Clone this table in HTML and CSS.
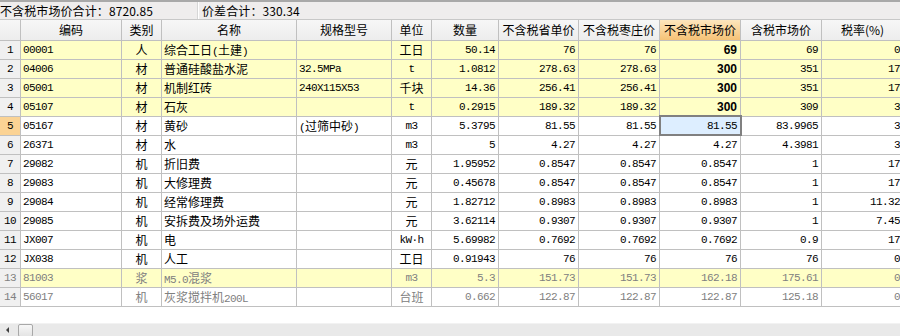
FILE: index.html
```html
<!DOCTYPE html>
<html lang="zh">
<head>
<meta charset="utf-8">
<link rel="stylesheet" href="styles.css">
</head>
<body>
<div class="app">
  <div class="sumbar">
    <div class="sum sum1">不含税市场价合计：8720.85</div>
    <div class="sum sum2">价差合计：330.34</div>
  </div>
  <div class="grid">
    <div class="row head">
      <div class="c rn"></div>
      <div class="c">编码</div>
      <div class="c">类别</div>
      <div class="c">名称</div>
      <div class="c">规格型号</div>
      <div class="c">单位</div>
      <div class="c">数量</div>
      <div class="c">不含税省单价</div>
      <div class="c">不含税枣庄价</div>
      <div class="c hot">不含税市场价</div>
      <div class="c">含税市场价</div>
      <div class="c">税率(%)</div>
    </div>

    <div class="row yel">
      <div class="c rn">1</div><div class="c code">00001</div><div class="c ctr">人</div>
      <div class="c txt">综合工日<span class="m">(</span>土建<span class="m">)</span></div><div class="c txt"></div><div class="c ctr">工日</div>
      <div class="c num">50.14</div><div class="c num">76</div><div class="c num">76</div><div class="c num b">69</div><div class="c num">69</div><div class="c num">0</div>
    </div>
    <div class="row yel">
      <div class="c rn">2</div><div class="c code">04006</div><div class="c ctr">材</div>
      <div class="c txt">普通硅酸盐水泥</div><div class="c code">32.5MPa</div><div class="c ctr m">t</div>
      <div class="c num">1.0812</div><div class="c num">278.63</div><div class="c num">278.63</div><div class="c num b">300</div><div class="c num">351</div><div class="c num">17</div>
    </div>
    <div class="row yel">
      <div class="c rn">3</div><div class="c code">05001</div><div class="c ctr">材</div>
      <div class="c txt">机制红砖</div><div class="c code">240X115X53</div><div class="c ctr">千块</div>
      <div class="c num">14.36</div><div class="c num">256.41</div><div class="c num">256.41</div><div class="c num b">300</div><div class="c num">351</div><div class="c num">17</div>
    </div>
    <div class="row yel">
      <div class="c rn">4</div><div class="c code">05107</div><div class="c ctr">材</div>
      <div class="c txt">石灰</div><div class="c txt"></div><div class="c ctr m">t</div>
      <div class="c num">0.2915</div><div class="c num">189.32</div><div class="c num">189.32</div><div class="c num b">300</div><div class="c num">309</div><div class="c num">3</div>
    </div>
    <div class="row">
      <div class="c rn cur">5</div><div class="c code">05167</div><div class="c ctr">材</div>
      <div class="c txt">黄砂</div><div class="c txt"><span class="m">(</span>过筛中砂<span class="m">)</span></div><div class="c ctr m">m3</div>
      <div class="c num">5.3795</div><div class="c num">81.55</div><div class="c num">81.55</div><div class="c num sel">81.55</div><div class="c num">83.9965</div><div class="c num">3</div>
    </div>
    <div class="row">
      <div class="c rn">6</div><div class="c code">26371</div><div class="c ctr">材</div>
      <div class="c txt">水</div><div class="c txt"></div><div class="c ctr m">m3</div>
      <div class="c num">5</div><div class="c num">4.27</div><div class="c num">4.27</div><div class="c num">4.27</div><div class="c num">4.3981</div><div class="c num">3</div>
    </div>
    <div class="row">
      <div class="c rn">7</div><div class="c code">29082</div><div class="c ctr">机</div>
      <div class="c txt">折旧费</div><div class="c txt"></div><div class="c ctr">元</div>
      <div class="c num">1.95952</div><div class="c num">0.8547</div><div class="c num">0.8547</div><div class="c num">0.8547</div><div class="c num">1</div><div class="c num">17</div>
    </div>
    <div class="row">
      <div class="c rn">8</div><div class="c code">29083</div><div class="c ctr">机</div>
      <div class="c txt">大修理费</div><div class="c txt"></div><div class="c ctr">元</div>
      <div class="c num">0.45678</div><div class="c num">0.8547</div><div class="c num">0.8547</div><div class="c num">0.8547</div><div class="c num">1</div><div class="c num">17</div>
    </div>
    <div class="row">
      <div class="c rn">9</div><div class="c code">29084</div><div class="c ctr">机</div>
      <div class="c txt">经常修理费</div><div class="c txt"></div><div class="c ctr">元</div>
      <div class="c num">1.82712</div><div class="c num">0.8983</div><div class="c num">0.8983</div><div class="c num">0.8983</div><div class="c num">1</div><div class="c num">11.32</div>
    </div>
    <div class="row">
      <div class="c rn">10</div><div class="c code">29085</div><div class="c ctr">机</div>
      <div class="c txt">安拆费及场外运费</div><div class="c txt"></div><div class="c ctr">元</div>
      <div class="c num">3.62114</div><div class="c num">0.9307</div><div class="c num">0.9307</div><div class="c num">0.9307</div><div class="c num">1</div><div class="c num">7.45</div>
    </div>
    <div class="row">
      <div class="c rn">11</div><div class="c code">JX007</div><div class="c ctr">机</div>
      <div class="c txt">电</div><div class="c txt"></div><div class="c ctr m">kW·h</div>
      <div class="c num">5.69982</div><div class="c num">0.7692</div><div class="c num">0.7692</div><div class="c num">0.7692</div><div class="c num">0.9</div><div class="c num">17</div>
    </div>
    <div class="row">
      <div class="c rn">12</div><div class="c code">JX038</div><div class="c ctr">机</div>
      <div class="c txt">人工</div><div class="c txt"></div><div class="c ctr">工日</div>
      <div class="c num">0.91943</div><div class="c num">76</div><div class="c num">76</div><div class="c num">76</div><div class="c num">76</div><div class="c num">0</div>
    </div>
    <div class="row yel dim">
      <div class="c rn">13</div><div class="c code">81003</div><div class="c ctr">浆</div>
      <div class="c txt"><span class="m">M5.0</span>混浆</div><div class="c txt"></div><div class="c ctr m">m3</div>
      <div class="c num">5.3</div><div class="c num">151.73</div><div class="c num">151.73</div><div class="c num">162.18</div><div class="c num">175.61</div><div class="c num">0</div>
    </div>
    <div class="row dim">
      <div class="c rn">14</div><div class="c code">56017</div><div class="c ctr">机</div>
      <div class="c txt">灰浆搅拌机<span class="m">200L</span></div><div class="c txt"></div><div class="c ctr">台班</div>
      <div class="c num">0.662</div><div class="c num">122.87</div><div class="c num">122.87</div><div class="c num">122.87</div><div class="c num">125.18</div><div class="c num">0</div>
    </div>
  </div>
  <div class="hscroll">
    <div class="arrow"></div>
    <div class="thumb"></div>
  </div>
</div>
</body>
</html>
```
FILE: styles.css
```css
* { box-sizing: border-box; }
html, body { margin: 0; padding: 0; }
body {
  width: 900px;
  height: 336px;
  overflow: hidden;
  background: #ffffff;
  font-family: "Noto Sans CJK SC", "Liberation Sans", sans-serif;
  font-size: 12px;
  color: #000;
}
.app {
  display: flex;
  flex-direction: column;
  height: 336px;
}
.sumbar {
  display: flex;
  height: 20px;
  background: #efeded;
  border-top: 2px solid #a9a9a9;
  border-bottom: 1px solid #c8c8c8;
  font-size: 12px;
  line-height: 17px;
}
.sum1 {
  width: 198px;
  border-right: 1px solid #d6d6d6;
  box-shadow: 1px 0 0 #ffffff;
  padding-left: 0;
  letter-spacing: 0.1px;
}
.sum2 { padding-left: 4px; letter-spacing: 0.1px; }

.grid {
  flex: 1;
  overflow: hidden;
  width: 904px;
}
.row {
  display: grid;
  grid-template-columns: 21px 101px 40px 135px 95px 40px 67px 80px 81px 81px 81px 82px;
  height: 19px;
  background: #ffffff;
}
.row.head {
  height: 21px;
  background: linear-gradient(#f7f7f7, #ececec);
}
.row.yel { background: #ffffc6; }
.c {
  position: relative;
  border-right: 1px solid #c0c0c0;
  border-bottom: 1px solid #c0c0c0;
  line-height: 18px;
  white-space: nowrap;
  overflow: hidden;
}
.head .c {
  text-align: center;
  line-height: 20px;
  font-size: 12px;
}
.head .c.hot {
  background: linear-gradient(#fde6bd, #f5c276);
}
.rn {
  background: #f0f0f0;
  text-align: center;
  font-family: "Liberation Mono", monospace;
  font-size: 11px;
  letter-spacing: -0.6px;
}
.head .rn { background: transparent; }
.rn.cur { background: #fbd394; }
.code {
  padding-left: 2px;
  font-family: "Liberation Mono", monospace;
  font-size: 11px;
  letter-spacing: -0.6px;
}
.txt { padding-left: 2px; }
.ctr { text-align: center; }
.num {
  text-align: right;
  padding-right: 3px;
  font-family: "Liberation Mono", monospace;
  font-size: 11px;
  letter-spacing: -0.6px;
}
.num.b {
  font-family: "Liberation Sans", Arial, sans-serif;
  font-weight: bold;
  font-size: 12px;
  letter-spacing: 0;
}
.m {
  font-family: "Liberation Mono", monospace;
  font-size: 11px;
  letter-spacing: -0.6px;
}
.dim .c { color: #808080; }
.sel {
  background: #ddeeff;
  overflow: visible;
  z-index: 1;
}
.sel::after {
  content: "";
  position: absolute;
  top: -2px;
  left: -1px;
  right: -2px;
  bottom: -1px;
  border: 2px solid #808080;
}

.hscroll {
  height: 13px;
  flex: none;
  background: #e9e9e9;
  border-top: 1px solid #f2f2f2;
  display: flex;
  align-items: flex-start;
}
.arrow {
  width: 0;
  height: 0;
  margin: 3px 0 0 6px;
  border-top: 3px solid transparent;
  border-bottom: 3px solid transparent;
  border-right: 3px solid #404040;
}
.thumb {
  margin-left: 9px;
  width: 15px;
  height: 13px;
  background: linear-gradient(#f7f7f7, #e4e4e4);
  border: 1px solid #a8a8a8;
  border-radius: 2px;
}
```
